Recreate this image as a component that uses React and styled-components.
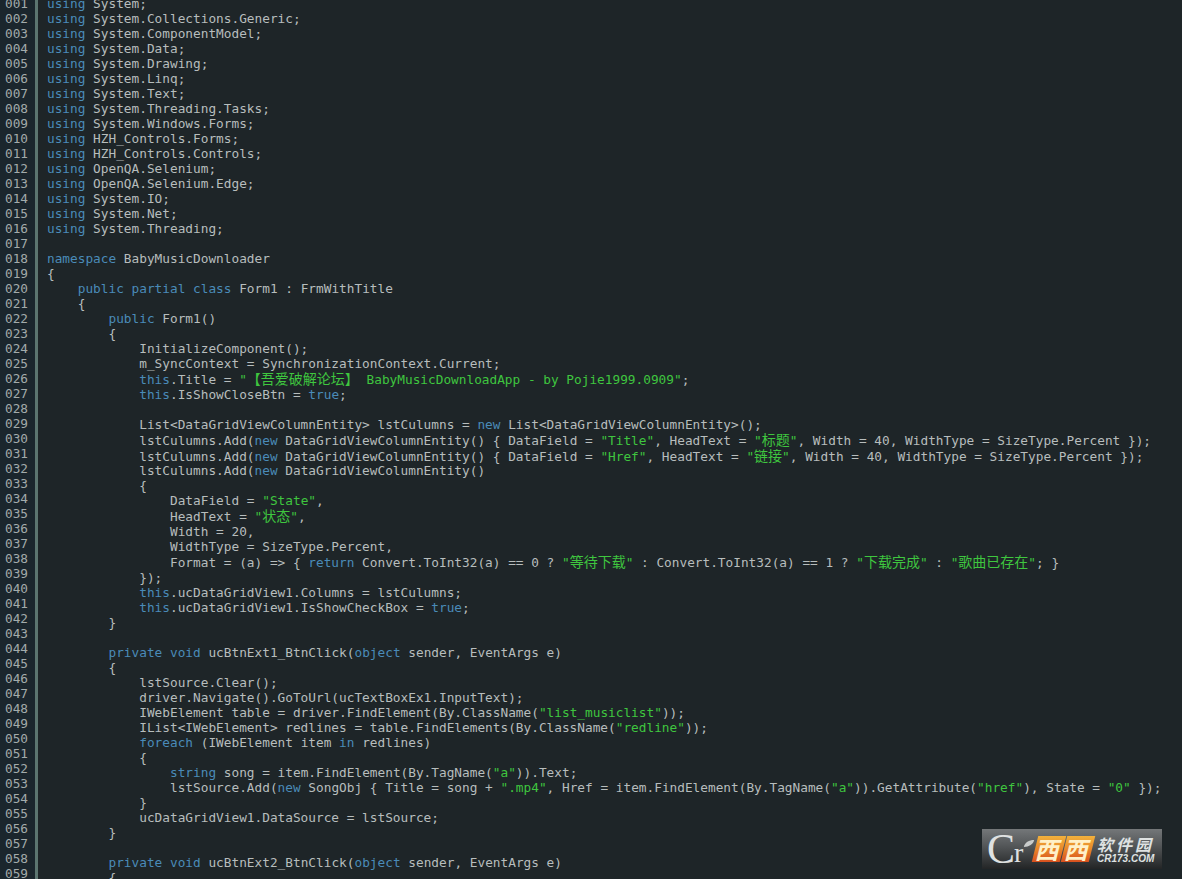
import React from "react";
import styled, { createGlobalStyle } from "styled-components";

const GlobalStyle = createGlobalStyle`
  html, body {
    margin: 0;
    padding: 0;
    height: 879px;
    overflow: hidden;
    background: #1e2528;
  }
`;

const Editor = styled.div`
  position: relative;
  display: flex;
  width: 1182px;
  height: 879px;
  overflow: hidden;
  background: #1e2528;
  font-family: "DejaVu Sans Mono", "Liberation Mono", monospace;
  font-size: 12.78px;
  color: #b7bdbd;
`;

const Gutter = styled.div`
  flex: none;
  width: 35px;
  margin-top: -4px;
  padding-left: 5px;
  box-sizing: border-box;
  background: #1b262d;
  color: #a3abab;
`;

const GutterLine = styled.div`
  height: 15px;
  line-height: 15px;
`;

const GutterBar = styled.div`
  flex: none;
  width: 3px;
  background: #5c7570;
`;

const Code = styled.div`
  flex: 1;
  margin-top: -4px;
  padding-left: 9px;
`;

const CodeLine = styled.div`
  height: ${(p) => (p.$tall ? "15.8px" : "15px")};
  line-height: 15px;
  white-space: pre;
`;

const Keyword = styled.span`
  color: #4a8bb8;
`;

const Str = styled.span`
  color: #3fc63f;
`;

const Cjk = styled.span`
  font-family: "Noto Sans CJK SC", sans-serif;
  font-size: 14px;
  line-height: 15px;
`;

const Badge = styled.div`
  position: absolute;
  left: 982px;
  top: 829px;
  width: 180px;
  height: 40px;
  display: flex;
  align-items: center;
  overflow: hidden;
  background: linear-gradient(#747779 0%, #55585a 40%, #232526 100%);
  font-family: "Liberation Sans", sans-serif;
`;

const BadgeMark = styled.div`
  position: relative;
  flex: none;
  width: 53px;
  height: 40px;
  color: #dfe1e1;
  font-family: "Liberation Serif", serif;
`;

const MarkC = styled.span`
  position: absolute;
  left: 5px;
  top: 0;
  font-size: 42px;
  line-height: 40px;
`;

const MarkR = styled.span`
  position: absolute;
  left: 32px;
  top: 10px;
  font-size: 28px;
  line-height: 28px;
`;

const Leaf = styled.svg`
  position: absolute;
  left: 41px;
  top: 10px;
`;

const TileRow = styled.div`
  flex: none;
  display: flex;
  gap: 1px;
  margin-right: 5px;
`;

const Tile = styled.div`
  width: 28px;
  height: 26px;
  display: flex;
  align-items: center;
  justify-content: center;
  overflow: hidden;
  transform: skewX(-14deg);
  background: linear-gradient(#f2b13c, #e8872a 50%, #d8501e);
  color: #fff0c8;
  font-family: "Noto Sans CJK SC", sans-serif;
  font-weight: 700;
  font-size: 24px;
  line-height: 26px;
`;

const BadgeText = styled.div`
  display: flex;
  flex-direction: column;
  align-items: flex-start;
  gap: 2px;
  margin-top: 2px;
  color: #dfe2e2;
  font-style: italic;
`;

const BadgeName = styled.span`
  font-family: "Noto Sans CJK SC", sans-serif;
  font-weight: 700;
  font-size: 16px;
  line-height: 16px;
  letter-spacing: 3px;
`;

const BadgeDomain = styled.span`
  font-weight: 700;
  font-size: 10px;
  line-height: 10px;
`;

const KEYWORDS = "using|namespace|public|partial|class|private|void|object|string|this|new|true|return|foreach|in";
const TOKEN = new RegExp(`("[^"]*")|\\b(${KEYWORDS})\\b`, "g");
const CJK_RUN = /([\u3000-\u9fff]+)/;

const source = `using System;
using System.Collections.Generic;
using System.ComponentModel;
using System.Data;
using System.Drawing;
using System.Linq;
using System.Text;
using System.Threading.Tasks;
using System.Windows.Forms;
using HZH_Controls.Forms;
using HZH_Controls.Controls;
using OpenQA.Selenium;
using OpenQA.Selenium.Edge;
using System.IO;
using System.Net;
using System.Threading;

namespace BabyMusicDownloader
{
    public partial class Form1 : FrmWithTitle
    {
        public Form1()
        {
            InitializeComponent();
            m_SyncContext = SynchronizationContext.Current;
            this.Title = "【吾爱破解论坛】 BabyMusicDownloadApp - by Pojie1999.0909";
            this.IsShowCloseBtn = true;

            List<DataGridViewColumnEntity> lstCulumns = new List<DataGridViewColumnEntity>();
            lstCulumns.Add(new DataGridViewColumnEntity() { DataField = "Title", HeadText = "标题", Width = 40, WidthType = SizeType.Percent });
            lstCulumns.Add(new DataGridViewColumnEntity() { DataField = "Href", HeadText = "链接", Width = 40, WidthType = SizeType.Percent });
            lstCulumns.Add(new DataGridViewColumnEntity()
            {
                DataField = "State",
                HeadText = "状态",
                Width = 20,
                WidthType = SizeType.Percent,
                Format = (a) => { return Convert.ToInt32(a) == 0 ? "等待下载" : Convert.ToInt32(a) == 1 ? "下载完成" : "歌曲已存在"; }
            });
            this.ucDataGridView1.Columns = lstCulumns;
            this.ucDataGridView1.IsShowCheckBox = true;
        }

        private void ucBtnExt1_BtnClick(object sender, EventArgs e)
        {
            lstSource.Clear();
            driver.Navigate().GoToUrl(ucTextBoxEx1.InputText);
            IWebElement table = driver.FindElement(By.ClassName("list_musiclist"));
            IList<IWebElement> redlines = table.FindElements(By.ClassName("redline"));
            foreach (IWebElement item in redlines)
            {
                string song = item.FindElement(By.TagName("a")).Text;
                lstSource.Add(new SongObj { Title = song + ".mp4", Href = item.FindElement(By.TagName("a")).GetAttribute("href"), State = "0" });
            }
            ucDataGridView1.DataSource = lstSource;
        }

        private void ucBtnExt2_BtnClick(object sender, EventArgs e)
        {`.split("\n");

// 中文单独包一层，字号和等宽字符不一样
const renderCjk = (text) =>
  text.split(CJK_RUN).map((part, i) => (i % 2 ? <Cjk key={i}>{part}</Cjk> : part));

const highlight = (line) => {
  const out = [];
  let last = 0;
  for (const m of line.matchAll(TOKEN)) {
    out.push(line.slice(last, m.index));
    if (m[1]) out.push(<Str key={m.index}>{renderCjk(m[1])}</Str>);
    else out.push(<Keyword key={m.index}>{m[2]}</Keyword>);
    last = m.index + m[0].length;
  }
  out.push(line.slice(last));
  return out;
};

const Logo = () => (
  <Badge>
    <BadgeMark>
      <MarkC>C</MarkC>
      <MarkR>r</MarkR>
      <Leaf width="12" height="9" viewBox="0 0 14 10">
        <path d="M1 9C2 4 7 1 13 1C12 6 7 9 1 9Z" fill="#c9cccc" />
      </Leaf>
    </BadgeMark>
    <TileRow>
      <Tile>西</Tile>
      <Tile>西</Tile>
    </TileRow>
    <BadgeText>
      <BadgeName>软件园</BadgeName>
      <BadgeDomain>CR173.COM</BadgeDomain>
    </BadgeText>
  </Badge>
);

export default function App() {
  return (
    <>
      <GlobalStyle />
      <Editor>
        <Gutter>
          {source.map((_, i) => (
            <GutterLine key={i}>{String(i + 1).padStart(3, "0")}</GutterLine>
          ))}
        </Gutter>
        <GutterBar />
        <Code>
          {source.map((line, i) => (
            <CodeLine key={i} $tall={CJK_RUN.test(line)}>
              {highlight(line)}
            </CodeLine>
          ))}
        </Code>
        <Logo />
      </Editor>
    </>
  );
}
